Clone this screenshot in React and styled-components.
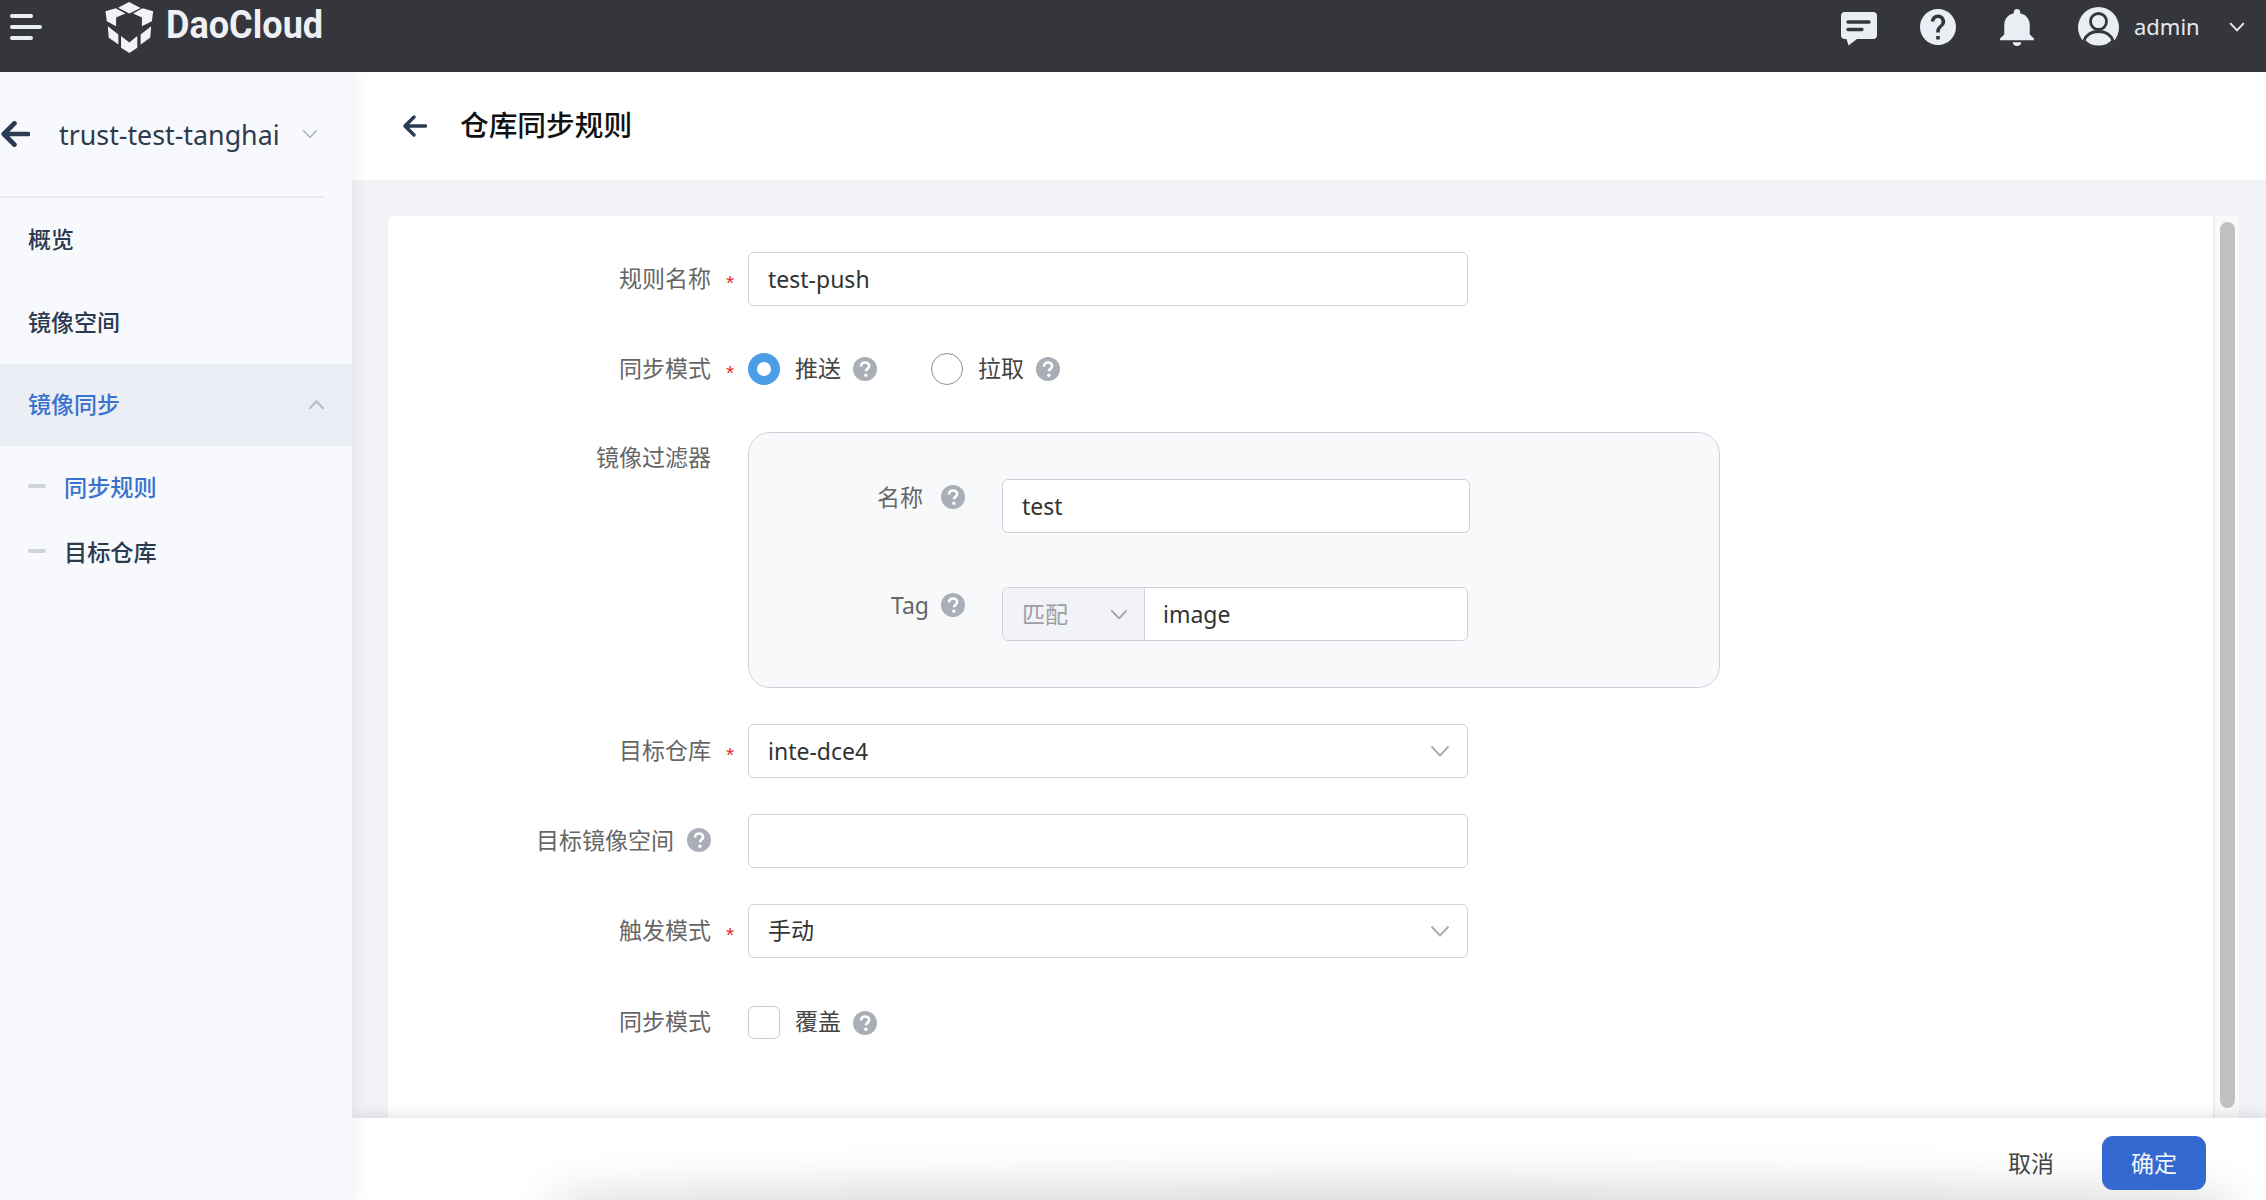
import React from 'react';
import styled, { createGlobalStyle } from 'styled-components';

const FONT = `"Noto Sans", "Noto Sans CJK SC", sans-serif`;

const Global = createGlobalStyle`
  html, body { margin: 0; padding: 0; height: 100%; }
  body { font-family: ${FONT}; background: #f1f3f6; color: #333; }
  #root { height: 100%; }
  * { box-sizing: border-box; }
`;

const Page = styled.div`
  width: 2266px; height: 1200px; display: flex; flex-direction: column; overflow: hidden;
`;
const Header = styled.header`
  height: 72px; flex: none; background: #35363c; display: flex; align-items: center;
  padding: 0 21px 18px 10px; position: relative; z-index: 3;
`;
const Burger = styled.div`
  width: 32px; display: flex; flex-direction: column; gap: 6.5px;
`;
const BurgerBar = styled.span`
  display: block; height: 4.5px; border-radius: 3px; background: #eaedf4; width: ${p => p.$w}px;
`;
const LogoMark = styled.svg`
  width: 50px; height: 53px; margin-left: 62px; flex: none; margin-top: 1px;
`;
const Wordmark = styled.div`
  font-family: Roboto, sans-serif; font-weight: 700; font-size: 39px; line-height: 40px; color: #eef0f5;
  margin-left: 12px; margin-top: -4px; transform: scaleX(.925); transform-origin: left center;
`;
const Spacer = styled.div`flex: 1;`;
const TopIcon = styled.svg`
  flex: none; margin-left: ${p => p.$ml || 0}px; display: block;
`;
const UserName = styled.span`
  font-size: 22px; color: #e6e9f0; margin: -3px 1px 0 15px; width: 63px; white-space: nowrap; line-height: 30px;
`;

const Body = styled.div`
  flex: 1; display: flex; min-height: 0;
`;
const Sidebar = styled.aside`
  width: 352px; flex: none; background: #f7f9fd; box-shadow: 2px 0 18px rgba(0,0,0,.07);
  position: relative; z-index: 2; display: flex; flex-direction: column;
`;
const Project = styled.div`
  height: 126px; width: 325px; display: flex; align-items: center; border-bottom: 2px solid #e9ecf1;
`;
const ProjectName = styled.span`
  font-size: 26.8px; color: #2f3b4c; margin-left: 29px; width: 243px; white-space: nowrap;
`;
const NavItem = styled.div`
  height: 83px; display: flex; align-items: center; padding: 0 29px 4px 28px;
  font-size: 23px; font-weight: 500; color: #2c3a4f;
`;
const ActiveNavItem = styled.div`
  height: 82px; display: flex; align-items: center; justify-content: space-between; padding: 0 27px 5px 28px;
  font-size: 23px; font-weight: 500; color: #3a72ce; background: #ebeef5;
`;
const NavList = styled.div`
  display: flex; flex-direction: column;
`;
const SubList = styled.div`
  display: flex; flex-direction: column; padding-top: 7px;
`;
const SubItem = styled.div`
  height: 65px; display: flex; align-items: center; padding-left: 28px; gap: 18px;
  font-size: 23.2px; font-weight: 500; color: ${p => p.$active ? '#3a72ce' : '#2c3a4f'};
`;
const Dash = styled.span`
  display: block; width: 18px; height: 4px; background: #cfd3db; border-radius: 2px;
`;

const Main = styled.main`
  flex: 1; min-width: 0; display: flex; flex-direction: column; position: relative;
`;
const PageHeader = styled.div`
  height: 108px; flex: none; background: #fff; display: flex; align-items: center; padding: 0 0 0 50px; gap: 33px;
`;
const Title = styled.h1`
  margin: -2px 0 0; font-size: 28.7px; font-weight: 500; color: #111; line-height: 40px;
`;
const Content = styled.div`
  flex: 1; min-height: 0; padding: 36px 26px 0 36px; display: flex;
`;
const Card = styled.section`
  flex: 1; background: #fff; border-radius: 6px 6px 0 0; display: flex; overflow: hidden;
`;
const Form = styled.div`
  flex: 1; display: flex; flex-direction: column; padding-top: 36px;
`;
const ScrollTrack = styled.div`
  width: 27px; flex: none; background: #f9f9f9; border-left: 2px solid #ececec; border-right: 1px solid #f0f0f0;
  padding: 6px 4px 10px 5px; display: flex;
`;
const ScrollThumb = styled.div`
  flex: 1; background: #c1c1c1; border-radius: 8px;
`;
const Row = styled.div`
  display: grid; grid-template-columns: 360px 1fr; align-items: ${p => p.$top ? 'start' : 'center'};
  margin-top: ${p => p.$mt || 0}px;
`;
const Label = styled.div`
  display: flex; align-items: center; justify-content: flex-end; font-size: 23px; color: #666;
  line-height: 26px; white-space: nowrap; padding-top: ${p => p.$pt || 0}px; padding-bottom: ${p => p.$pt ? 0 : 3}px;
`;
const Star = styled.span`
  width: 37px; flex: none; padding-left: 15px; color: #e02d2d; font-size: 21px; line-height: 18px; padding-top: 11px;
  font-family: "Liberation Sans", sans-serif;
`;
const Field = styled.div`
  width: ${p => p.$w || 720}px; height: 54px; border: 1.5px solid #cfd2dc; border-radius: 6px; background: #fff;
  display: flex; align-items: center; justify-content: space-between; padding: 0 17px 0 19px;
  font-size: 23px; color: #333; line-height: 30px;
`;
const CjkValue = styled.span`
  display: block; margin-top: -3px;
`;
const Chevron = styled.svg`
  width: ${p => p.$s || 20}px; height: ${p => (p.$s || 20) * 0.6}px; flex: none; display: block;
`;
const Options = styled.div`
  display: flex; align-items: center;
`;
const Radio = styled.span`
  width: 32px; height: 32px; border-radius: 50%; flex: none; display: block;
  border: ${p => p.$on ? '9px solid #4a9de6' : '1.5px solid #8d9096'}; background: #fff;
`;
const OptionText = styled.span`
  font-size: 23px; color: #444; margin: 0 12px 0 15px; padding-bottom: 3px; line-height: 26px; white-space: nowrap;
`;
const Help = styled.svg`
  width: 24px; height: 24px; flex: none; display: block; margin-left: ${p => p.$ml || 0}px;
`;
const OptionGap = styled.span`
  display: block; width: 54px; flex: none;
`;
const Check = styled.span`
  width: 32px; height: 33px; border-radius: 6px; border: 1.5px solid #c5c8d2; background: #fff; display: block; flex: none;
`;
const FilterBox = styled.div`
  width: 972px; height: 256px; background: #f8f9fb; border: 1.5px solid #cfd2dc; border-radius: 22px;
  padding-top: 46px; display: flex; flex-direction: column; gap: 54px;
`;
const FilterRow = styled.div`
  display: grid; grid-template-columns: 253px 1fr; align-items: start;
`;
const FilterLabel = styled.div`
  display: flex; align-items: center; justify-content: flex-end; padding: 5px 37px 0 0; font-size: 23px; color: #666; line-height: 26px;
`;
const InputGroup = styled.div`
  width: 466px; height: 54px; display: flex; border: 1.5px solid #cfd2dc; border-radius: 6px; background: #fff; overflow: hidden;
`;
const Prefix = styled.div`
  width: 142px; flex: none; background: #f1f3f6; border-right: 1.5px solid #cfd2dc; display: flex; align-items: center;
  justify-content: space-between; padding: 0 16px 0 19px; font-size: 23px; color: #9a9ea6;
`;
const GroupValue = styled.div`
  flex: 1; display: flex; align-items: center; padding-left: 18px; font-size: 23px; color: #333;
`;

const Footer = styled.footer`
  height: 82px; flex: none; background: #fff; position: relative; overflow: hidden; display: flex; align-items: flex-start;
  justify-content: flex-end; padding: 18px 60px 0 0; gap: 48px;
  &::after {
    content: ''; position: absolute; left: 230px; right: 60px; bottom: -22px; height: 10px;
    box-shadow: 0 0 46px 28px rgba(0,0,0,.15); border-radius: 50%;
  }
`;
const FooterWrap = styled.div`
  flex: none; position: relative; z-index: 1; box-shadow: 0 -2px 14px rgba(0,0,0,.12);
`;
const CancelBtn = styled.button`
  border: 0; background: none; font: inherit; font-size: 23px; color: #444; height: 54px; padding: 0 0 3px; position: relative; z-index: 1;
`;
const OkBtn = styled.button`
  border: 0; background: #3369d0; color: #f4f6fb; font: inherit; font-size: 23px; height: 54px; width: 104px;
  border-radius: 11px; position: relative; z-index: 1; padding: 0 0 3px;
`;

const DARK = '#35363c';
const ICON = '#eaedf4';

const ChevronDown = ({ color = '#a9afb9', s, w = 2 }) => (
  <Chevron viewBox="0 0 20 12" $s={s}>
    <path d="M1.5 1.5 L10 10.5 L18.5 1.5" fill="none" stroke={color} strokeWidth={w} />
  </Chevron>
);
const ChevronUp = () => (
  <Chevron viewBox="0 0 20 12" $s={17} style={{ marginTop: 5 }}>
    <path d="M1.5 10.5 L10 1.5 L18.5 10.5" fill="none" stroke="#b7bbc3" strokeWidth="2.4" />
  </Chevron>
);
const HelpIcon = ({ ml }) => (
  <Help viewBox="0 0 24 24" $ml={ml}>
    <circle cx="12" cy="12" r="12" fill="#a9aeb7" />
    <path d="M8 9.4c0-2.4 1.8-3.9 4.1-3.9 2.3 0 4 1.4 4 3.4 0 2.7-3.2 2.8-3.2 5.4" fill="none" stroke="#fff" strokeWidth="2.6" />
    <circle cx="12.9" cy="18.2" r="1.7" fill="#fff" />
  </Help>
);
const BackArrow = ({ w, h, sw }) => (
  <svg viewBox="0 0 24 22" width={w} height={h} style={{ display: 'block', flex: 'none' }}>
    <path d="M23 11H3M11.5 2 L2.5 11 L11.5 20" fill="none" stroke="#2b3b52" strokeWidth={sw} strokeLinecap="round" strokeLinejoin="round" />
  </svg>
);

export default function App() {
  return (
    <Page>
      <Global />
      <Header>
        <Burger>
          <BurgerBar $w={23} />
          <BurgerBar $w={32} />
          <BurgerBar $w={23} />
        </Burger>
        <LogoMark viewBox="315 0 150 160">
          <g fill="#f2f3f6">
            <path d="M390 3 L425 21 L391 38 L357 20Z" />
            <path d="M319 31 L350 22 L379 38 L351 50 L351 76 L323 61Z" />
            <path d="M463 31 L431 22 L402 38 L429 50 L429 76 L459 61Z" />
            <path d="M326 76 L358 101 L358 131 L329 111Z" />
            <path d="M457 76 L425 101 L425 131 L454 111Z" />
            <path d="M366 106 L391 125 L415 106 L415 141 L391 157 L366 141Z" />
          </g>
        </LogoMark>
        <Wordmark>DaoCloud</Wordmark>
        <Spacer />
        <TopIcon viewBox="0 0 36 34" width="36" height="34" style={{ marginTop: 4 }}>
          <path d="M4 0H32a4 4 0 0 1 4 4V23a4 4 0 0 1-4 4H16L7.5 33.5 5.5 27H4a4 4 0 0 1-4-4V4a4 4 0 0 1 4-4Z" fill={ICON} />
          <path d="M7 10H28M7 17.5H21" stroke={DARK} strokeWidth="3.4" strokeLinecap="round" />
        </TopIcon>
        <TopIcon viewBox="2 2 20 20" width="36" height="36" $ml={43}>
          <path fill={ICON} d="M12 2C6.48 2 2 6.48 2 12s4.48 10 10 10 10-4.48 10-10S17.52 2 12 2zm1 17h-2v-2h2v2zm2.07-7.75l-.9.92C13.45 12.9 13 13.5 13 15h-2v-.5c0-1.1.45-2.1 1.17-2.83l1.24-1.26c.37-.36.59-.86.59-1.41 0-1.1-.9-2-2-2s-2 .9-2 2H8c0-2.21 1.79-4 4-4s4 1.79 4 4c0 .88-.36 1.68-.93 2.25z" />
        </TopIcon>
        <TopIcon viewBox="4 2.5 16 19.5" width="34" height="37" preserveAspectRatio="none" $ml={44}>
          <path fill={ICON} d="M12 22c1.1 0 2-.9 2-2h-4c0 1.1.89 2 2 2zm6-6v-5c0-3.07-1.64-5.64-4.5-6.32V4c0-.83-.67-1.5-1.5-1.5s-1.5.67-1.5 1.5v.68C7.63 5.36 6 7.92 6 11v5l-2 2v1h16v-1l-2-2z" />
        </TopIcon>
        <TopIcon viewBox="0 0 41 41" width="41" height="41" $ml={44}>
          <circle cx="20.5" cy="20.5" r="20.5" fill={ICON} />
          <circle cx="20.5" cy="14.5" r="8" fill={ICON} stroke={DARK} strokeWidth="2.8" />
          <path d="M6 33.5C9 26.5 14 24.5 20.5 24.5S32 26.5 35 33.5C31 38.5 26 40 20.5 40S10 38.5 6 33.5Z" fill={ICON} stroke={DARK} strokeWidth="2.8" />
        </TopIcon>
        <UserName>admin</UserName>
        <TopIcon as="span" $ml={31}><ChevronDown color="#eaedf4" s={16} w={2.4} /></TopIcon>
      </Header>
      <Body>
        <Sidebar>
          <Project>
            <BackArrow w={30} h={26} sw={4} />
            <ProjectName>trust-test-tanghai</ProjectName>
            <ChevronDown color="#b0b5be" s={16} />
          </Project>
          <NavList>
            <NavItem>概览</NavItem>
            <NavItem>镜像空间</NavItem>
            <ActiveNavItem>镜像同步<ChevronUp /></ActiveNavItem>
          </NavList>
          <SubList>
            <SubItem $active><Dash />同步规则</SubItem>
            <SubItem><Dash />目标仓库</SubItem>
          </SubList>
        </Sidebar>
        <Main>
          <PageHeader>
            <BackArrow w={25} h={22} sw={3.4} />
            <Title>仓库同步规则</Title>
          </PageHeader>
          <Content>
            <Card>
              <Form>
                <Row>
                  <Label>规则名称<Star>*</Star></Label>
                  <Field>test-push</Field>
                </Row>
                <Row $mt={47}>
                  <Label>同步模式<Star>*</Star></Label>
                  <Options>
                    <Radio $on />
                    <OptionText>推送</OptionText>
                    <HelpIcon />
                    <OptionGap />
                    <Radio />
                    <OptionText>拉取</OptionText>
                    <HelpIcon />
                  </Options>
                </Row>
                <Row $mt={47} $top>
                  <Label $pt={12}>镜像过滤器<Star /></Label>
                  <FilterBox>
                    <FilterRow>
                      <FilterLabel>名称<HelpIcon ml={18} /></FilterLabel>
                      <Field $w={468}>test</Field>
                    </FilterRow>
                    <FilterRow>
                      <FilterLabel>Tag<HelpIcon ml={12} /></FilterLabel>
                      <InputGroup>
                        <Prefix><CjkValue>匹配</CjkValue><ChevronDown color="#9ea3ab" s={18} /></Prefix>
                        <GroupValue>image</GroupValue>
                      </InputGroup>
                    </FilterRow>
                  </FilterBox>
                </Row>
                <Row $mt={36}>
                  <Label>目标仓库<Star>*</Star></Label>
                  <Field>inte-dce4<ChevronDown /></Field>
                </Row>
                <Row $mt={36}>
                  <Label>目标镜像空间<HelpIcon ml={13} /><Star /></Label>
                  <Field />
                </Row>
                <Row $mt={36}>
                  <Label>触发模式<Star>*</Star></Label>
                  <Field><CjkValue>手动</CjkValue><ChevronDown /></Field>
                </Row>
                <Row $mt={48}>
                  <Label>同步模式<Star /></Label>
                  <Options>
                    <Check />
                    <OptionText>覆盖</OptionText>
                    <HelpIcon />
                  </Options>
                </Row>
              </Form>
              <ScrollTrack><ScrollThumb /></ScrollTrack>
            </Card>
          </Content>
          <FooterWrap>
            <Footer>
              <CancelBtn>取消</CancelBtn>
              <OkBtn>确定</OkBtn>
            </Footer>
          </FooterWrap>
        </Main>
      </Body>
    </Page>
  );
}
